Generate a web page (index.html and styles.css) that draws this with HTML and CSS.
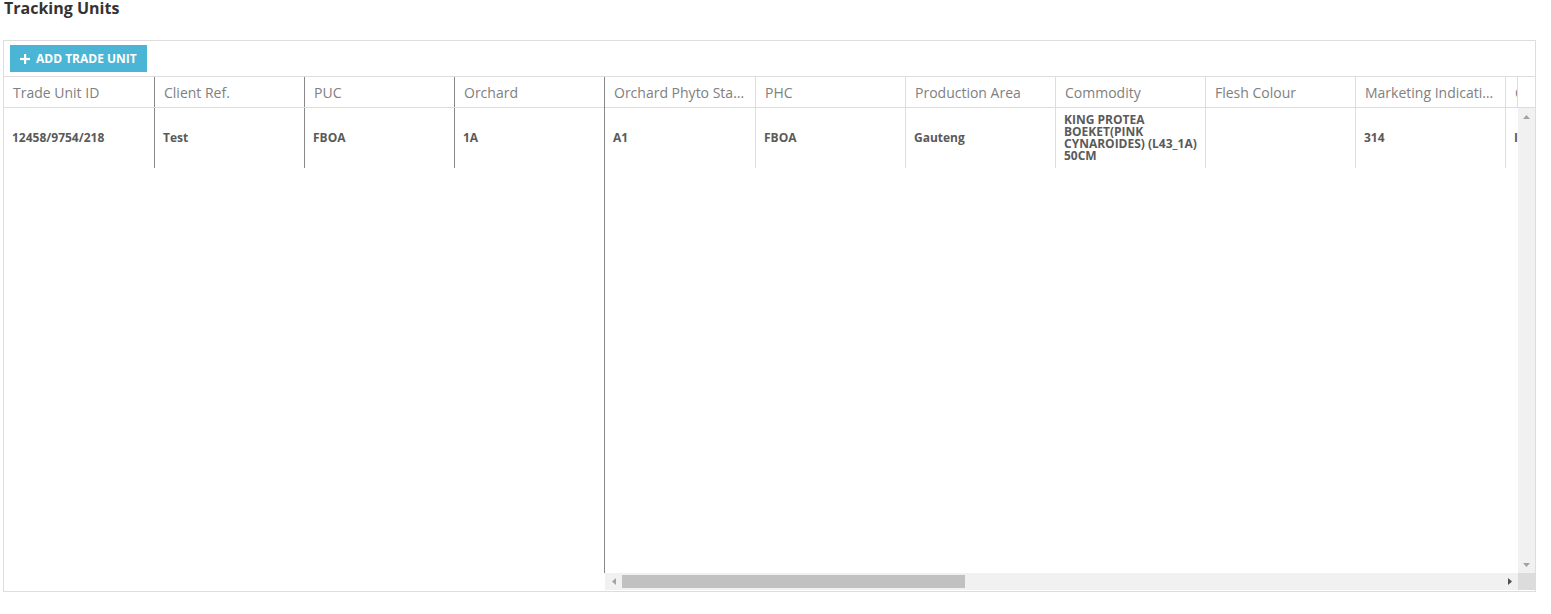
FILE: index.html
```html
<!DOCTYPE html>
<html lang="en">
<head>
<meta charset="utf-8">
<title>Tracking Units</title>
<link rel="stylesheet" href="styles.css">
</head>
<body>
<div class="page">
  <h1 class="title">Tracking Units</h1>
  <div class="panel">
    <div class="toolbar">
      <button class="btn-add" type="button">
        <svg class="plus" width="10" height="10" viewBox="0 0 10 10"><rect x="4" y="0" width="2.2" height="10" fill="#fff"/><rect x="0" y="3.9" width="10" height="2.2" fill="#fff"/></svg>
        <span>ADD TRADE UNIT</span>
      </button>
    </div>
    <div class="grid">
      <div class="pinned">
        <div class="hrow">
          <div class="hcell">Trade Unit ID</div>
          <div class="hcell">Client Ref.</div>
          <div class="hcell">PUC</div>
          <div class="hcell">Orchard</div>
        </div>
        <div class="brow">
          <div class="bcell">12458/9754/218</div>
          <div class="bcell">Test</div>
          <div class="bcell">FBOA</div>
          <div class="bcell">1A</div>
        </div>
      </div>
      <div class="main">
        <div class="mhead">
          <div class="hview">
            <div class="hcell">Orchard Phyto Status</div>
            <div class="hcell">PHC</div>
            <div class="hcell">Production Area</div>
            <div class="hcell">Commodity</div>
            <div class="hcell">Flesh Colour</div>
            <div class="hcell">Marketing Indication</div>
            <div class="hcell">Class</div>
          </div>
        </div>
        <div class="mbody">
          <div class="bview">
            <div class="brow">
              <div class="bcell">A1</div>
              <div class="bcell">FBOA</div>
              <div class="bcell">Gauteng</div>
              <div class="bcell">KING PROTEA BOEKET(PINK CYNAROIDES) (L43_1A) 50CM</div>
              <div class="bcell"></div>
              <div class="bcell">314</div>
              <div class="bcell">I</div>
            </div>
          </div>
          <div class="vscroll">
            <div class="sbtn"><svg width="7" height="4" viewBox="0 0 7 4"><polygon points="0,4 3.5,0 7,4" fill="#a3a3a3"/></svg></div>
            <div class="sbtn"><svg width="7" height="4" viewBox="0 0 7 4"><polygon points="0,0 7,0 3.5,4" fill="#a3a3a3"/></svg></div>
          </div>
        </div>
        <div class="hbar">
          <div class="htrack">
            <div class="sbtn"><svg width="4" height="7" viewBox="0 0 4 7"><polygon points="4,0 4,7 0,3.5" fill="#a3a3a3"/></svg></div>
            <div class="hlane"><div class="thumb"></div></div>
            <div class="sbtn"><svg width="4" height="7" viewBox="0 0 4 7"><polygon points="0,0 4,3.5 0,7" fill="#505050"/></svg></div>
          </div>
          <div class="corner"></div>
        </div>
      </div>
    </div>
  </div>
</div>
</body>
</html>
```
FILE: styles.css
```css
html, body {
  margin: 0;
  padding: 0;
  background: #fff;
}
body {
  font-family: "Open Sans", "Liberation Sans", sans-serif;
}
.page {
  padding-left: 3px;
}
.title {
  margin: 0 0 24px 0;
  padding-left: 1px;
  font-size: 16px;
  line-height: 16px;
  font-weight: 700;
  color: #333;
}
.panel {
  width: 1533px;
  height: 552px;
  box-sizing: border-box;
  border: 1px solid #ddd;
}
.toolbar {
  padding: 4px 6px;
  height: 35px;
  box-sizing: border-box;
}
.btn-add {
  display: flex;
  align-items: center;
  gap: 6px;
  height: 27px;
  padding: 0 10px;
  border: 0;
  margin: 0;
  background: #4ab5d5;
  color: #fff;
  font-family: "Open Sans", "Liberation Sans", sans-serif;
  font-size: 12px;
  font-weight: 700;
  line-height: 27px;
  cursor: pointer;
}
.grid {
  display: flex;
  align-items: flex-start;
  height: 515px;
  box-sizing: border-box;
  border-top: 1px solid #ddd;
}
.pinned {
  width: 601px;
  height: 496px;
  box-sizing: border-box;
  border-right: 1px solid #888;
  flex: none;
}
.main {
  width: 930px;
  flex: none;
  display: flex;
  flex-direction: column;
}
.hrow, .mhead {
  display: flex;
  height: 31px;
  box-sizing: border-box;
  border-bottom: 1px solid #ddd;
}
.hview {
  display: flex;
  width: 913px;
  box-sizing: border-box;
  border-right: 1px solid #ddd;
  overflow: hidden;
}
.hcell {
  flex: none;
  width: 150px;
  height: 30px;
  box-sizing: border-box;
  padding: 1px 8px 0 9px;
  font-size: 14px;
  line-height: 30px;
  color: #808080;
  white-space: nowrap;
  overflow: hidden;
  text-overflow: ellipsis;
}
.hcell + .hcell {
  border-left: 1px solid #ddd;
}
.pinned .hcell + .hcell {
  border-left-color: #888;
}
.brow {
  display: flex;
  height: 60px;
}
.bcell {
  flex: none;
  width: 150px;
  height: 60px;
  box-sizing: border-box;
  padding: 0 2px 0 8px;
  display: flex;
  align-items: center;
  font-size: 12px;
  line-height: 12px;
  font-weight: 700;
  color: #5a5a5a;
  overflow: hidden;
}
.bcell + .bcell {
  border-left: 1px solid #ddd;
}
.pinned .bcell + .bcell {
  border-left-color: #888;
}
.mbody {
  display: flex;
  height: 465px;
}
.bview {
  width: 913px;
  overflow: hidden;
}
.vscroll {
  width: 17px;
  background: #f1f1f1;
  display: flex;
  flex-direction: column;
  justify-content: space-between;
}
.sbtn {
  width: 17px;
  height: 17px;
  flex: none;
  display: flex;
  align-items: center;
  justify-content: center;
}
.sbtn svg {
  display: block;
}
.hbar {
  display: flex;
  height: 17px;
}
.htrack {
  width: 913px;
  display: flex;
  background: #f1f1f1;
}
.hlane {
  flex: 1;
  display: flex;
  align-items: center;
}
.thumb {
  width: 343px;
  height: 13px;
  background: #c1c1c1;
}
.corner {
  width: 17px;
  background: #dcdcdc;
}
```
